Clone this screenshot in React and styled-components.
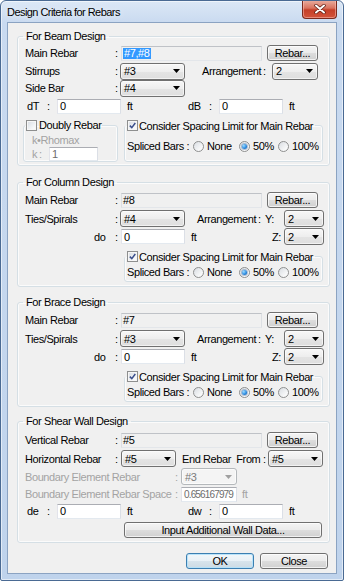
import React from 'react';
import styled, { createGlobalStyle } from 'styled-components';

const GlobalStyle = createGlobalStyle`
  html, body {
    margin: 0;
    padding: 0;
    background: #fff;
  }
  body {
    font-family: "Liberation Sans", Arial, sans-serif;
    font-size: 11px;
    letter-spacing: -0.4px;
    color: #000;
  }
  * {
    box-sizing: border-box;
  }
`;

const Window = styled.div`
  width: 344px;
  height: 581px;
  display: flex;
  flex-direction: column;
  border: 1px solid #4a6a93;
  border-radius: 6px 6px 2px 2px;
  background: linear-gradient(180deg, #dce8f6 0%, #c9daf0 22px, #bfd3ec 100%);
  box-shadow: inset 0 0 0 1px rgba(255, 255, 255, 0.55);
  overflow: hidden;
`;

const TitleBar = styled.div`
  height: 21px;
  flex: none;
  display: flex;
  align-items: center;
  padding-left: 6px;
`;

const Title = styled.span`
  font-size: 11px;
  letter-spacing: -0.55px;
  color: #000;
  text-shadow: 0 0 6px rgba(255, 255, 255, 0.9);
`;

const CloseBox = styled.div`
  align-self: flex-start;
  margin: -1px 6px 0 auto;
  width: 35px;
  height: 19px;
  border: 1px solid #7a2a1e;
  border-top: none;
  border-radius: 0 0 4px 4px;
  background: linear-gradient(180deg, #eab0a2 0%, #d9735f 45%, #c53f28 55%, #d2533b 100%);
  box-shadow: inset 0 0 0 1px rgba(255, 200, 190, 0.5);
  display: flex;
  align-items: center;
  justify-content: center;
`;

const Client = styled.div`
  flex: 1;
  margin: 0 6px 6px;
  border: 1px solid #8ba3c2;
  background: #f0f0f0;
  display: flex;
  flex-direction: column;
  padding: 6px 0 0 9px;
`;

const Group = styled.fieldset`
  margin: ${p => p.$mt || 0}px 0 0 0;
  padding: 0 0 ${p => p.$pb || 0}px 7px;
  width: 313px;
  min-width: 0;
  border: 1px solid #d5dfe5;
  border-radius: 3px;
  box-shadow: inset 0 0 0 1px rgba(255, 255, 255, 0.7);
`;

const Legend = styled.legend`
  margin-left: -2px;
  padding: 0 3px;
  height: 14px;
  line-height: 14px;
`;

const InnerGroup = styled.fieldset`
  margin: ${p => p.$mt || 0}px 0 0 ${p => p.$ml || 0}px;
  padding: 0 0 ${p => p.$pb || 0}px ${p => p.$pl || 0}px;
  width: ${p => p.$w}px;
  min-width: 0;
  border: 1px solid #d5dfe5;
  border-radius: 3px;
  box-shadow: inset 0 0 0 1px rgba(255, 255, 255, 0.7);
`;

const InnerLegend = styled.legend`
  margin-left: ${p => p.$ml || 0}px;
  padding: 0 ${p => p.$pad || 1}px;
  height: 14px;
  line-height: 14px;
`;

const CheckLabel = styled.span`
  display: inline-flex;
  align-items: center;
  gap: ${p => p.$gap || 2}px;
  height: 14px;
`;

const SubRow = styled.div`
  display: flex;
  align-items: stretch;
  margin-top: ${p => p.$mt || 0}px;
  margin-left: ${p => p.$ml || 0}px;
`;

const Row = styled.div`
  display: flex;
  align-items: center;
  height: ${p => p.$h || 16}px;
  margin-top: ${p => p.$mt || 0}px;
  margin-left: ${p => p.$ml || 0}px;
  white-space: pre;
`;

const Label = styled.span`
  flex: none;
  width: ${p => (p.$w ? `${p.$w}px` : 'auto')};
  margin-left: ${p => p.$ml || 0}px;
  padding-left: ${p => p.$pl || 0}px;
  color: ${p => (p.$disabled ? '#a3a3a3' : '#000')};
  white-space: pre;
`;

const TextBox = styled.div`
  flex: none;
  width: ${p => p.$w}px;
  height: ${p => p.$h || 15}px;
  border: 1px solid;
  border-color: #abadb3 #dbdfe6 #e3e9ef #e2e3ea;
  background: #fff;
  padding-left: 2px;
  display: flex;
  align-items: center;
  overflow: hidden;
  white-space: nowrap;
  color: ${p => (p.$disabled ? '#6d6d6d' : '#000')};
  font-size: ${p => (p.$tight ? '10px' : 'inherit')};
  letter-spacing: ${p => (p.$tight ? '-0.85px' : 'inherit')};
`;

const ReadField = styled.div`
  flex: none;
  width: ${p => p.$w}px;
  height: 15px;
  border: 1px solid;
  border-color: #bfc2c7 #dcdfe3 #e3e6ea #dcdfe3;
  background: #f0f0f0;
  padding-left: 1px;
  display: flex;
  align-items: center;
`;

const Selected = styled.span`
  background: #3399ff;
  color: #fff;
  padding: 0 1px;
  line-height: 11px;
`;

const ComboBox = styled.div`
  flex: none;
  width: ${p => p.$w}px;
  height: ${p => p.$h || 17}px;
  border: 1px solid ${p => (p.$disabled ? '#b4b8bb' : '#707070')};
  border-radius: 3px;
  background: ${p =>
    p.$disabled
      ? '#f4f4f4'
      : 'linear-gradient(180deg, #f7f7f7 0%, #eeeeee 50%, #e4e4e4 51%, #dedede 100%)'};
  box-shadow: inset 0 0 0 1px rgba(255, 255, 255, 0.6);
  color: ${p => (p.$disabled ? '#7a7a7a' : '#000')};
  display: flex;
  align-items: center;
  justify-content: space-between;
  padding: 0 4px 0 3px;
`;

const Button = styled.button`
  flex: none;
  width: ${p => p.$w}px;
  height: 16px;
  margin: 0 0 0 ${p => p.$ml || 0}px;
  padding: 0;
  border: 1px solid ${p => (p.$default ? '#3c7fb1' : '#707070')};
  border-radius: 3px;
  background: ${p =>
    p.$default
      ? 'linear-gradient(180deg, #f2f7fa 0%, #e9f1f6 50%, #d8e4ec 51%, #cddbe4 100%)'
      : 'linear-gradient(180deg, #f4f4f4 0%, #ebebeb 50%, #dddddd 51%, #d1d1d1 100%)'};
  box-shadow: inset 0 0 0 1px ${p => (p.$default ? 'rgba(180, 225, 250, 0.9)' : 'rgba(255, 255, 255, 0.7)')};
  font-family: inherit;
  font-size: 11px;
  letter-spacing: inherit;
  line-height: 14px;
  color: #000;
`;

const Box = styled.span`
  flex: none;
  width: 11px;
  height: 11px;
  border: 1px solid #8e8f8f;
  background: linear-gradient(135deg, #d6dbe2 0%, #f4f6f8 70%, #ffffff 100%);
  box-shadow: inset 0 0 0 1px #f6f6f6;
  display: flex;
  align-items: center;
  justify-content: center;
`;

const RadioCircle = styled.span`
  flex: none;
  width: 11px;
  height: 11px;
  border-radius: 50%;
  border: 1px solid #8e8f8f;
  background: linear-gradient(135deg, #d9dde2 0%, #f6f7f8 70%, #ffffff 100%);
  display: flex;
  align-items: center;
  justify-content: center;
  &::after {
    content: '';
    display: ${p => (p.$on ? 'block' : 'none')};
    width: 5px;
    height: 5px;
    border-radius: 50%;
    background: radial-gradient(circle at 35% 35%, #9fdcff 0%, #2b8be0 55%, #0f4f9e 100%);
    box-shadow: 0 0 0 1px rgba(40, 90, 150, 0.35);
  }
`;

const RadioItem = styled.span`
  flex: none;
  display: inline-flex;
  align-items: center;
  gap: 3px;
  width: ${p => (p.$w ? `${p.$w}px` : 'auto')};
`;

const Footer = styled.div`
  display: flex;
  justify-content: flex-end;
  margin-top: 10px;
  padding-right: 8px;
`;

function Arrow({ disabled }) {
  return (
    <svg width="7" height="4" viewBox="0 0 7 4">
      <polygon points="0,0 7,0 3.5,4" fill={disabled ? '#a0a0a0' : '#000'} />
    </svg>
  );
}

function Combo({ w, value, disabled }) {
  return (
    <ComboBox $w={w} $disabled={disabled}>
      <span>{value}</span>
      <Arrow disabled={disabled} />
    </ComboBox>
  );
}

function Check({ on }) {
  return (
    <Box>
      {on && (
        <svg width="7" height="7" viewBox="0 0 7 7">
          <path d="M0.8 3.6 L2.8 5.6 L6.3 1" stroke="#3b4f8c" strokeWidth="1.5" fill="none" />
        </svg>
      )}
    </Box>
  );
}

function SplicedRow({ mt }) {
  return (
    <Row $mt={mt}>
      <Label $w={66}>Spliced Bars :</Label>
      <RadioItem $w={46}>
        <RadioCircle />
        None
      </RadioItem>
      <RadioItem $w={39}>
        <RadioCircle $on />
        50%
      </RadioItem>
      <RadioItem>
        <RadioCircle />
        100%
      </RadioItem>
    </Row>
  );
}

function SpacingLegend() {
  return (
    <InnerLegend $ml={-2} $pad={2}>
      <CheckLabel $gap={1}>
        <Check on />
        Consider Spacing Limit for Main Rebar
      </CheckLabel>
    </InnerLegend>
  );
}

function MainRebarRow({ label, value, selected, mt }) {
  return (
    <Row $mt={mt}>
      <Label $w={90}>{label}</Label>
      <Label $w={6}>:</Label>
      <ReadField $w={141}>{selected ? <Selected>{value}</Selected> : value}</ReadField>
      <Button $w={51} $ml={5}>Rebar...</Button>
    </Row>
  );
}

function DepthRow({ a, b, mt }) {
  return (
    <Row $mt={mt}>
      <Label $w={20} $ml={2}>{a}</Label>
      <Label $w={10}>:</Label>
      <TextBox $w={64}>0</TextBox>
      <Label $w={61} $ml={6}>ft</Label>
      <Label $w={21}>{b}</Label>
      <Label $w={10}>:</Label>
      <TextBox $w={64}>0</TextBox>
      <Label $ml={6}>ft</Label>
    </Row>
  );
}

function MemberGroup({ title, mt, rebar, ties }) {
  return (
    <Group $mt={mt} $pb={4}>
      <Legend>{title}</Legend>
      <MainRebarRow label="Main Rebar" value={rebar} mt={3} />
      <Row $h={17} $mt={2}>
        <Label $w={90}>Ties/Spirals</Label>
        <Label $w={5}>:</Label>
        <Combo w={65} value={ties} />
        <Label $w={61} $ml={12}>Arrangement</Label>
        <Label $w={7}>:</Label>
        <Label $w={19}>Y:</Label>
        <Combo w={40} value="2" />
      </Row>
      <Row $h={17} $mt={1}>
        <Label $w={90} $pl={69}>do</Label>
        <Label $w={6}>:</Label>
        <TextBox $w={64}>0</TextBox>
        <Label $w={81} $ml={6}>ft</Label>
        <Label $w={12}>Z:</Label>
        <Combo w={40} value="2" />
      </Row>
      <InnerGroup $w={199} $pl={2} $ml={99} $mt={4} $pb={1}>
        <SpacingLegend />
        <SplicedRow mt={1} />
      </InnerGroup>
    </Group>
  );
}

export default function App() {
  return (
    <>
      <GlobalStyle />
      <Window>
        <TitleBar>
          <Title>Design Criteria for Rebars</Title>
          <CloseBox>
            <svg width="12" height="10" viewBox="0 0 12 10">
              <path d="M2 1.5 L10 8.5 M10 1.5 L2 8.5" stroke="#5a1a10" strokeWidth="3.4" strokeLinecap="round" />
              <path d="M2 1.5 L10 8.5 M10 1.5 L2 8.5" stroke="#ffffff" strokeWidth="2" strokeLinecap="round" />
            </svg>
          </CloseBox>
        </TitleBar>

        <Client>
          <Group $pb={3}>
            <Legend>For Beam Design</Legend>
            <MainRebarRow label="Main Rebar" value="#7,#8" selected mt={2} />
            <Row $mt={2}>
              <Label $w={90}>Stirrups</Label>
              <Label $w={5}>:</Label>
              <Combo w={65} value="#3" />
              <Label $w={61} $ml={17}>Arrangement</Label>
              <Label $w={9}>:</Label>
              <Combo w={46} value="2" />
            </Row>
            <Row $mt={1}>
              <Label $w={90}>Side Bar</Label>
              <Label $w={5}>:</Label>
              <Combo w={65} value="#4" />
            </Row>
            <DepthRow a="dT" b="dB" mt={2} />
            <SubRow $mt={4} $ml={-2}>
              <InnerGroup $w={95} $pl={8}>
                <InnerLegend $ml={-7}>
                  <CheckLabel>
                    <Check />
                    Doubly Rebar
                  </CheckLabel>
                </InnerLegend>
                <Row $h={13} $mt={1}>
                  <Label $disabled>k•Rhomax</Label>
                </Row>
                <Row $h={14} $mt={1}>
                  <Label $w={7} $disabled>k</Label>
                  <Label $w={10} $disabled>:</Label>
                  <TextBox $w={49} $h={14} $disabled>1</TextBox>
                </Row>
              </InnerGroup>
              <InnerGroup $w={199} $pl={2} $ml={6}>
                <SpacingLegend />
                <SplicedRow mt={6} />
              </InnerGroup>
            </SubRow>
          </Group>

          <MemberGroup title="For Column Design" mt={9} rebar="#8" ties="#4" />
          <MemberGroup title="For Brace Design" mt={8} rebar="#7" ties="#3" />

          <Group $mt={7} $pb={4}>
            <Legend>For Shear Wall Design</Legend>
            <MainRebarRow label="Vertical Rebar" value="#5" mt={4} />
            <Row $h={17} $mt={2}>
              <Label $w={90}>Horizontal Rebar</Label>
              <Label $w={6}>:</Label>
              <Combo w={55} value="#5" />
              <Label $w={86} $ml={6}>End Rebar  From :</Label>
              <Combo w={55} value="#5" />
            </Row>
            <Row $h={17} $mt={1}>
              <Label $w={150} $disabled>Boundary Element Rebar</Label>
              <Label $w={6} $disabled>:</Label>
              <Combo w={56} value="#3" disabled />
            </Row>
            <Row $mt={1}>
              <Label $w={150} $disabled>Boundary Element Rebar Space</Label>
              <Label $w={6} $disabled>:</Label>
              <TextBox $w={56} $disabled $tight>0.656167979</TextBox>
              <Label $ml={5} $disabled>ft</Label>
            </Row>
            <DepthRow a="de" b="dw" mt={1} />
            <Row $mt={3}>
              <Button $w={198} $ml={99}>Input Additional Wall Data...</Button>
            </Row>
          </Group>

          <Footer>
            <Button $w={68} $default>OK</Button>
            <Button $w={68} $ml={6}>Close</Button>
          </Footer>
        </Client>
      </Window>
    </>
  );
}
